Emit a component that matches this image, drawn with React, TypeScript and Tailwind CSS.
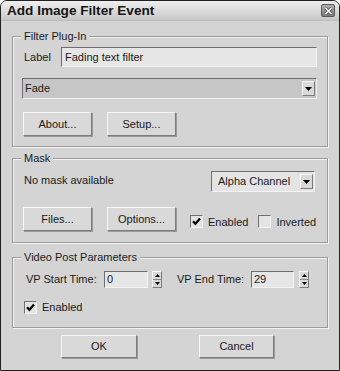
import React from "react";

const sunken =
  "border border-t-[#6f6f6f] border-l-[#6f6f6f] border-r-[#f4f4f4] border-b-[#f4f4f4]";
const raised =
  "border border-t-[#f6f6f6] border-l-[#f6f6f6] border-r-[#7c7c7c] border-b-[#7c7c7c] bg-[#d9d9d9]";

function Btn({ w, h, children, className = "" }: { w: string; h: string; children: React.ReactNode; className?: string }) {
  return (
    <div className={`${w} ${h} ${raised} shadow-[1px_1px_0_#9a9a9a] flex items-center justify-center text-[#1a1a1a] ${className}`}>
      {children}
    </div>
  );
}

function Arrow() {
  return (
    <div className={`w-[13px] h-[15px] ${raised} flex items-center justify-center`}>
      <svg width="7" height="4" viewBox="0 0 7 4">
        <path d="M0 0 H7 L3.5 4 Z" fill="#000" />
      </svg>
    </div>
  );
}

function Check({ checked }: { checked?: boolean }) {
  return (
    <div className={`w-[13px] h-[13px] ${sunken} bg-[#e4e4e4] flex items-center justify-center`}>
      {checked && (
        <svg width="9" height="9" viewBox="0 0 9 9">
          <path d="M1 4.2 L3.4 6.8 L8 1.6" stroke="#000" strokeWidth="2.2" fill="none" />
        </svg>
      )}
    </div>
  );
}

function Spinner() {
  return (
    <div className={`w-[10px] h-[17px] ${raised} flex flex-col`}>
      <div className="flex-1 flex items-center justify-center border-b border-[#8a8a8a]">
        <svg width="5" height="3" viewBox="0 0 5 3">
          <path d="M0 3 H5 L2.5 0 Z" fill="#000" />
        </svg>
      </div>
      <div className="flex-1 flex items-center justify-center">
        <svg width="5" height="3" viewBox="0 0 5 3">
          <path d="M0 0 H5 L2.5 3 Z" fill="#000" />
        </svg>
      </div>
    </div>
  );
}

function Group({ title, className = "", children }: { title: string; className?: string; children: React.ReactNode }) {
  return (
    <fieldset className={`border border-[#9c9c9c] shadow-[inset_1px_1px_0_#f2f2f2,1px_1px_0_#f2f2f2] m-0 p-0 min-w-0 ${className}`}>
      <legend className="ml-[8px] px-[3px] leading-[13px] bg-[#d4d4d4] text-[#1a1a1a]">{title}</legend>
      {children}
    </fieldset>
  );
}

export default function App() {
  return (
    <div className="w-[340px] h-[371px] bg-[#d4d4d4] border border-[#222] rounded-t-[7px] overflow-hidden flex flex-col font-['Liberation_Sans',Arial,sans-serif] text-[11px] text-[#1a1a1a]">
      <div className="h-[20px] shrink-0 flex items-center justify-between pl-[6px] pr-[4px] bg-gradient-to-b from-[#efefef] to-[#c8c8c8] border-b border-[#bdbdbd]">
        <span className="text-[13.6px] font-bold leading-[16px] text-[#151515] mt-[1px]">Add Image Filter Event</span>
        <div className="w-[14px] h-[13px] rounded-[2px] border border-[#5a5a5a] bg-gradient-to-b from-[#b0b0b0] to-[#7c7c7c] flex items-center justify-center">
          <svg width="9" height="8" viewBox="0 0 9 8">
            <path d="M1.5 1 L7.5 7 M7.5 1 L1.5 7" stroke="#444" strokeWidth="3" />
            <path d="M1.5 1 L7.5 7 M7.5 1 L1.5 7" stroke="#fff" strokeWidth="1.6" />
          </svg>
        </div>
      </div>

      <div className="flex flex-col px-[11px] pt-[9px]">
        <Group title="Filter Plug-In">
          <div className="flex flex-col pt-[4px] pl-[9px] pr-[10px] pb-[10px]">
            <div className="flex items-center h-[20px]">
              <span className="w-[39px] pl-[2px]">Label</span>
              <div className={`flex-1 h-[20px] ${sunken} bg-[#e6e6e6] flex items-center pl-[3px]`}>Fading text filter</div>
            </div>
            <div className={`mt-[11px] h-[21px] ${sunken} bg-[#c6c6c6] flex items-center justify-between pl-[2px] pr-[1px]`}>
              <span>Fade</span>
              <Arrow />
            </div>
            <div className="mt-[13px] flex gap-[15px] pl-[1px]">
              <Btn w="w-[69px]" h="h-[24px]">About...</Btn>
              <Btn w="w-[69px]" h="h-[24px]">Setup...</Btn>
            </div>
          </div>
        </Group>

        <Group title="Mask" className="mt-[5px]">
          <div className="flex flex-col pt-[6px] pl-[9px] pr-[10px] pb-[11px]">
            <div className="flex items-start justify-between h-[21px]">
              <span className="pl-[2px] mt-[1px]">No mask available</span>
              <div className={`w-[104px] h-[21px] mr-[2px] ${sunken} bg-[#e4e4e4] flex items-center justify-between pl-[6px] pr-[1px]`}>
                <span>Alpha Channel</span>
                <Arrow />
              </div>
            </div>
            <div className="mt-[15px] flex items-end pl-[1px]">
              <Btn w="w-[69px]" h="h-[24px]">Files...</Btn>
              <Btn w="w-[69px]" h="h-[24px]" className="ml-[15px]">Options...</Btn>
              <div className="flex items-center ml-[14px] mb-[1px]">
                <Check checked />
                <span className="ml-[5px]">Enabled</span>
                <div className="ml-[10px]"><Check /></div>
                <span className="ml-[5px]">Inverted</span>
              </div>
            </div>
          </div>
        </Group>

        <Group title="Video Post Parameters" className="mt-[8px]">
          <div className="flex flex-col pt-[7px] pl-[9px] pr-[10px] pb-[11px]">
            <div className="flex items-center h-[17px]">
              <span className="w-[82px] pl-[4px]">VP Start Time:</span>
              <div className={`w-[44px] h-[17px] ${sunken} bg-[#e6e6e6] flex items-center pl-[2px]`}>0</div>
              <div className="ml-[4px]"><Spinner /></div>
              <span className="w-[74px] ml-[15px]">VP End Time:</span>
              <div className={`w-[43px] h-[17px] ${sunken} bg-[#e6e6e6] flex items-center pl-[2px]`}>29</div>
              <div className="ml-[5px]"><Spinner /></div>
            </div>
            <div className="mt-[11px] flex items-center pl-[2px]">
              <Check checked />
              <span className="ml-[5px]">Enabled</span>
            </div>
          </div>
        </Group>

        <div className="mt-[7px] flex pl-[49px] gap-[62px]">
          <Btn w="w-[76px]" h="h-[23px]">OK</Btn>
          <Btn w="w-[75px]" h="h-[23px]">Cancel</Btn>
        </div>
      </div>
    </div>
  );
}
